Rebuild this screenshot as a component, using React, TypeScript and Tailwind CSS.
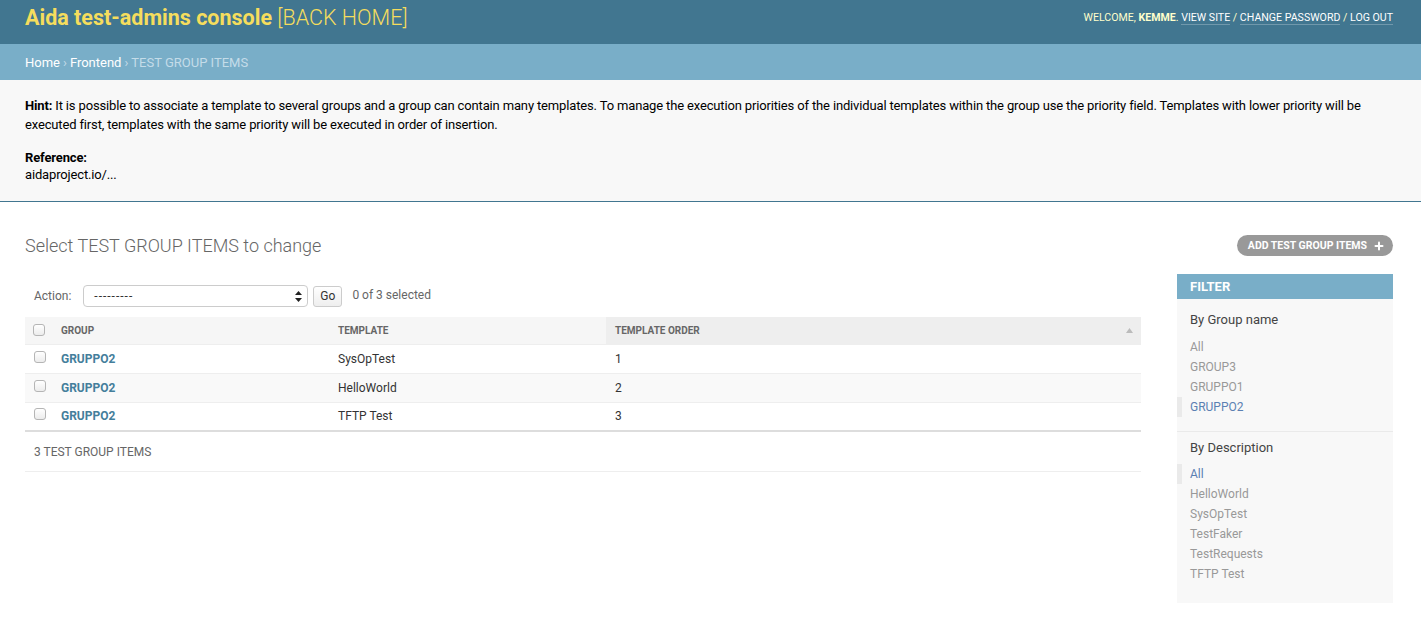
import { Plus } from "lucide-react";

const rows = [
  { group: "GRUPPO2", template: "SysOpTest", order: "1" },
  { group: "GRUPPO2", template: "HelloWorld", order: "2" },
  { group: "GRUPPO2", template: "TFTP Test", order: "3" },
];

const groupFilters = [
  { label: "All", selected: false },
  { label: "GROUP3", selected: false },
  { label: "GRUPPO1", selected: false },
  { label: "GRUPPO2", selected: true },
];

const descFilters = [
  { label: "All", selected: true },
  { label: "HelloWorld", selected: false },
  { label: "SysOpTest", selected: false },
  { label: "TestFaker", selected: false },
  { label: "TestRequests", selected: false },
  { label: "TFTP Test", selected: false },
];

function Check() {
  return (
    <span className="block h-[12px] w-[12px] rounded-[3px] border border-[#b5b5b5] bg-gradient-to-b from-white to-[#ececec]" />
  );
}

function FilterList({ items, last }: { items: { label: string; selected: boolean }[]; last?: boolean }) {
  return (
    <ul className={`mt-[7px] ${last ? "mb-[19px]" : "mb-[14px]"}`}>
      {items.map((f) => (
        <li
          key={f.label}
          className={`flex h-[20px] items-center border-l-[5px] pl-[8px] text-[12px] ${
            f.selected ? "border-[#eaeaea] text-[#5b80b2]" : "border-transparent text-[#999]"
          }`}
        >
          {f.label}
        </li>
      ))}
    </ul>
  );
}

export default function App() {
  return (
    <div className="min-h-screen bg-white font-['Roboto',_'Liberation_Sans',_sans-serif] text-[#333]">
      {/* header */}
      <div className="flex h-[44px] items-start justify-between bg-[#417690] pl-[25px] pr-[28px] pt-[7px]">
        <h1 className="text-[21.5px] leading-[22px] text-[#f5dd5d]">
          <span className="font-bold">Aida test-admins console</span>{" "}
          <span className="font-light">[BACK HOME]</span>
        </h1>
        <div className="mt-[4px] text-[10.6px] leading-[14px] text-[#ffc]">
          WELCOME, <strong className="font-bold">KEMME</strong>.{" "}
          <span className="border-b border-white/25 text-white">VIEW SITE</span> /{" "}
          <span className="border-b border-white/25 text-white">CHANGE PASSWORD</span> /{" "}
          <span className="border-b border-white/25 text-white">LOG OUT</span>
        </div>
      </div>

      {/* breadcrumbs */}
      <div className="flex h-[36px] items-center bg-[#79aec8] px-[25px] pt-[1px] text-[13px] text-[#c4dce8]">
        <span className="text-white">Home</span>
        <span className="mx-[3px] text-[13px]">›</span>
        <span className="text-white">Frontend</span>
        <span className="mx-[3px] text-[13px]">›</span>
        <span>TEST GROUP ITEMS</span>
      </div>

      {/* hint */}
      <div className="border-b border-[#417690] bg-[#f8f8f8] px-[25px] pb-[18px] pt-[16px] text-[13px] tracking-[-0.15px] text-black">
        <p className="leading-[19px]">
          <strong className="font-bold">Hint:</strong> It is possible to associate a template to several groups and a group can contain many
          templates. To manage the execution priorities of the individual templates within the group use the priority field. Templates
          with lower priority will be executed first, templates with the same priority will be executed in order of insertion.
        </p>
        <p className="mt-[15px] leading-[17px]">
          <strong className="font-bold">Reference:</strong>
          <br />
          aidaproject.io/...
        </p>
      </div>

      {/* content */}
      <div className="pl-[25px] pr-[28px] pt-[30px]">
        <div className="flex items-center justify-between">
          <h2 className="text-[18px] font-light text-[#666]">Select TEST GROUP ITEMS to change</h2>
          <span className="flex h-[21px] items-center gap-[6px] rounded-full bg-[#999] pl-[11px] pr-[8px] text-[10.5px] font-bold text-white">
            ADD TEST GROUP ITEMS
            <Plus size={12} strokeWidth={4} />
          </span>
        </div>

        <div className="mt-[16px] flex gap-[36px]">
          {/* changelist */}
          <div className="flex-1">
            <div className="flex h-[42px] items-center pl-[9px] text-[12px] text-[#666]">
              <span>Action:</span>
              <span className="ml-[12px] flex h-[22px] w-[225px] items-center justify-between rounded-[4px] border border-[#ccc] bg-white pl-[10px] pr-[5px] text-[#333]">
                <span className="tracking-[1px]">---------</span>
                <svg width="7" height="11" viewBox="0 0 7 11">
                  <path d="M3.5 0 L7 4 H0 Z M0 7 H7 L3.5 11 Z" fill="#222" />
                </svg>
              </span>
              <span className="ml-[5px] flex h-[21px] items-center rounded-[3px] border border-[#ccc] bg-gradient-to-b from-white to-[#eee] px-[6px] text-[12px] text-[#333]">
                Go
              </span>
              <span className="-mt-[2px] ml-[10px]">0 of 3 selected</span>
            </div>

            <table className="w-full border-collapse text-[12px]">
              <thead>
                <tr className="h-[27px] text-left text-[10px] font-bold uppercase text-[#666]">
                  <th className="w-[28px] border-b border-[#eee] bg-[#f6f6f6] pl-[8px]">
                    <Check />
                  </th>
                  <th className="w-[277px] border-b border-[#eee] bg-[#f6f6f6] pl-[8px] font-bold">GROUP</th>
                  <th className="w-[276px] border-b border-[#eee] bg-[#f6f6f6] pl-[8px] font-bold">TEMPLATE</th>
                  <th className="border-b border-[#eee] bg-[#eee] pl-[9px] font-bold">
                    <div className="flex items-center justify-between pr-[8px]">
                      TEMPLATE ORDER
                      <svg width="7" height="5" viewBox="0 0 7 5">
                        <path d="M3.5 0 L7 5 H0 Z" fill="#bbb" />
                      </svg>
                    </div>
                  </th>
                </tr>
              </thead>
              <tbody>
                {rows.map((r, i) => (
                  <tr
                    key={r.template}
                    className={`h-[29px] ${i === 2 ? "border-b-2 border-[#ddd]" : "border-b border-[#eee]"} ${
                      i === 1 ? "bg-[#f9f9f9]" : "bg-white"
                    }`}
                  >
                    <td className="pl-[9px] align-middle">
                      <div className="-mt-[4px]">
                        <Check />
                      </div>
                    </td>
                    <td className="pl-[8px] font-bold text-[#447e9b]">{r.group}</td>
                    <td className="pl-[8px]">{r.template}</td>
                    <td className="pl-[9px]">{r.order}</td>
                  </tr>
                ))}
              </tbody>
            </table>

            <div className="flex h-[40px] items-center border-b border-[#eee] pl-[9px] text-[12px] text-[#666]">
              3 TEST GROUP ITEMS
            </div>
          </div>

          {/* filter */}
          <div className="mt-[-1px] w-[216px] self-start bg-[#f8f8f8]">
            <div className="flex h-[25px] items-center bg-[#79aec8] px-[13px] text-[13px] font-bold text-white">FILTER</div>
            <h3 className="mt-[11px] px-[13px] text-[13px] text-[#444]">By Group name</h3>
            <FilterList items={groupFilters} />
            <div className="border-t border-[#eaeaea]" />
            <h3 className="mt-[6px] px-[13px] text-[13px] text-[#444]">By Description</h3>
            <FilterList items={descFilters} last />
          </div>
        </div>
      </div>
    </div>
  );
}
